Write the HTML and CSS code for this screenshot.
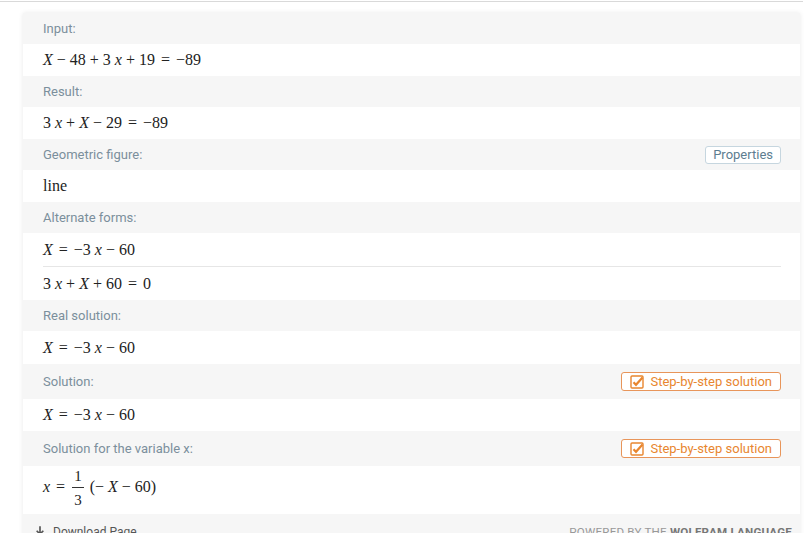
FILE: index.html
```html
<!DOCTYPE html>
<html>
<head>
<meta charset="utf-8">
<link rel="stylesheet" href="styles.css">
</head>
<body>
<div class="topline"></div>
<div class="card">
  <div class="hdr"><span class="lbl">Input:</span></div>
  <div class="row"><span class="m"><i>X</i> − 48 + 3 <i>x</i> + 19 <span class="eq">=</span> −89</span></div>

  <div class="hdr"><span class="lbl">Result:</span></div>
  <div class="row"><span class="m">3 <i>x</i> + <i>X</i> − 29 <span class="eq">=</span> −89</span></div>

  <div class="hdr"><span class="lbl">Geometric figure:</span><span class="btn props">Properties</span></div>
  <div class="row"><span class="m">line</span></div>

  <div class="hdr"><span class="lbl">Alternate forms:</span></div>
  <div class="row alt"><span class="m"><i>X</i> <span class="eq">=</span> −3 <i>x</i> − 60</span></div>
  <div class="row alt2"><span class="m">3 <i>x</i> + <i>X</i> + 60 <span class="eq">=</span> 0</span></div>

  <div class="hdr"><span class="lbl">Real solution:</span></div>
  <div class="row tall1"><span class="m"><i>X</i> <span class="eq">=</span> −3 <i>x</i> − 60</span></div>

  <div class="hdr hb"><span class="lbl">Solution:</span><span class="btn step"><svg class="chk" viewBox="0 0 14 14" width="14" height="14"><rect x="1" y="1" width="12" height="12" rx="1" fill="none" stroke="#e8862f" stroke-width="1.4"/><path d="M3.5 7.2 L6 9.8 L12.5 2.5" fill="none" stroke="#e8862f" stroke-width="2.2"/></svg>Step-by-step solution</span></div>
  <div class="row"><span class="m"><i>X</i> <span class="eq">=</span> −3 <i>x</i> − 60</span></div>

  <div class="hdr hb"><span class="lbl">Solution for the variable x:</span><span class="btn step"><svg class="chk" viewBox="0 0 14 14" width="14" height="14"><rect x="1" y="1" width="12" height="12" rx="1" fill="none" stroke="#e8862f" stroke-width="1.4"/><path d="M3.5 7.2 L6 9.8 L12.5 2.5" fill="none" stroke="#e8862f" stroke-width="2.2"/></svg>Step-by-step solution</span></div>
  <div class="row frow"><span class="m"><i>x</i> <span class="eq">=</span> <span class="frac"><span class="num">1</span><span class="den">3</span></span> (− <i>X</i> − 60)</span></div>

  <div class="footer">
    <span class="dl"><svg viewBox="0 0 12 14" width="10" height="12"><path d="M6 0 V9 M2 5.5 L6 9.5 L10 5.5 M1 13 H11" fill="none" stroke="#555" stroke-width="2"/></svg>Download Page</span>
    <span class="powered">POWERED BY THE <b>WOLFRAM LANGUAGE</b></span>
  </div>
</div>
</body>
</html>
```
FILE: styles.css
```css
html, body {
  margin: 0;
  padding: 0;
  background: #fff;
}
body {
  font-family: Roboto, "Liberation Sans", sans-serif;
  width: 812px;
  height: 533px;
  overflow: hidden;
}
.topline {
  width: 803px;
  height: 1px;
  margin-top: 1px;
  background: #d9d9d9;
}
.card {
  margin: 11px 0 0 23px;
  width: 777px;
  background: #fff;
  box-shadow: 0 0 5px rgba(0, 0, 0, 0.09);
}
.hdr {
  height: 31px;
  background: #f6f6f6;
  display: flex;
  align-items: center;
  justify-content: space-between;
  padding: 0 19px 0 20px;
}
.hdr.hb {
  height: 35px;
}
.lbl {
  font-size: 13px;
  color: #7b8f9c;
}
.row {
  height: 32px;
  display: flex;
  align-items: center;
  padding: 0 20px;
}
.row.tall1 {
  height: 33px;
}
.row.alt {
  height: 33px;
  border-bottom: 1px solid #e6e6e6;
  margin: 0 19px 0 20px;
  padding: 0;
}
.row.alt2 {
  height: 33px;
}
.row.frow {
  height: 48px;
  box-sizing: border-box;
  padding-bottom: 5px;
}
.m {
  font-family: "Liberation Serif", "Times New Roman", serif;
  font-size: 16px;
  line-height: 18px;
  color: #222;
  display: inline-block;
}
.m i {
  font-style: italic;
}
.eq {
  padding: 0 2px;
}
.frac {
  display: inline-block;
  vertical-align: -13px;
  text-align: center;
  margin: 0 2px 0 1px;
  font-size: 15px;
  line-height: 16px;
}
.num {
  display: block;
  border-bottom: 1px solid #333;
  padding: 0 2px 3px;
}
.den {
  display: block;
  padding-top: 4px;
}
.btn {
  font-size: 13px;
  height: 18px;
  box-sizing: border-box;
  display: inline-flex;
  align-items: center;
  border-radius: 3px;
  background: #fff;
}
.props {
  color: #5d7d90;
  border: 1px solid #c6d6df;
  padding: 0 7px;
}
.step {
  color: #e8862f;
  border: 1px solid #e8955a;
  padding: 0 8px 0 8px;
  height: 19px;
}
.chk {
  margin-right: 6px;
}
.footer {
  height: 40px;
  background: #f6f6f6;
  display: flex;
  justify-content: space-between;
  padding: 11px 8px 0 12px;
  box-sizing: border-box;
}
.dl {
  font-size: 12px;
  color: #555;
  display: inline-flex;
  align-items: center;
  gap: 8px;
  height: 14px;
}
.powered {
  font-size: 11.6px;
  color: #999;
  letter-spacing: 0.2px;
  height: 14px;
}
.powered b {
  color: #777;
}
```
